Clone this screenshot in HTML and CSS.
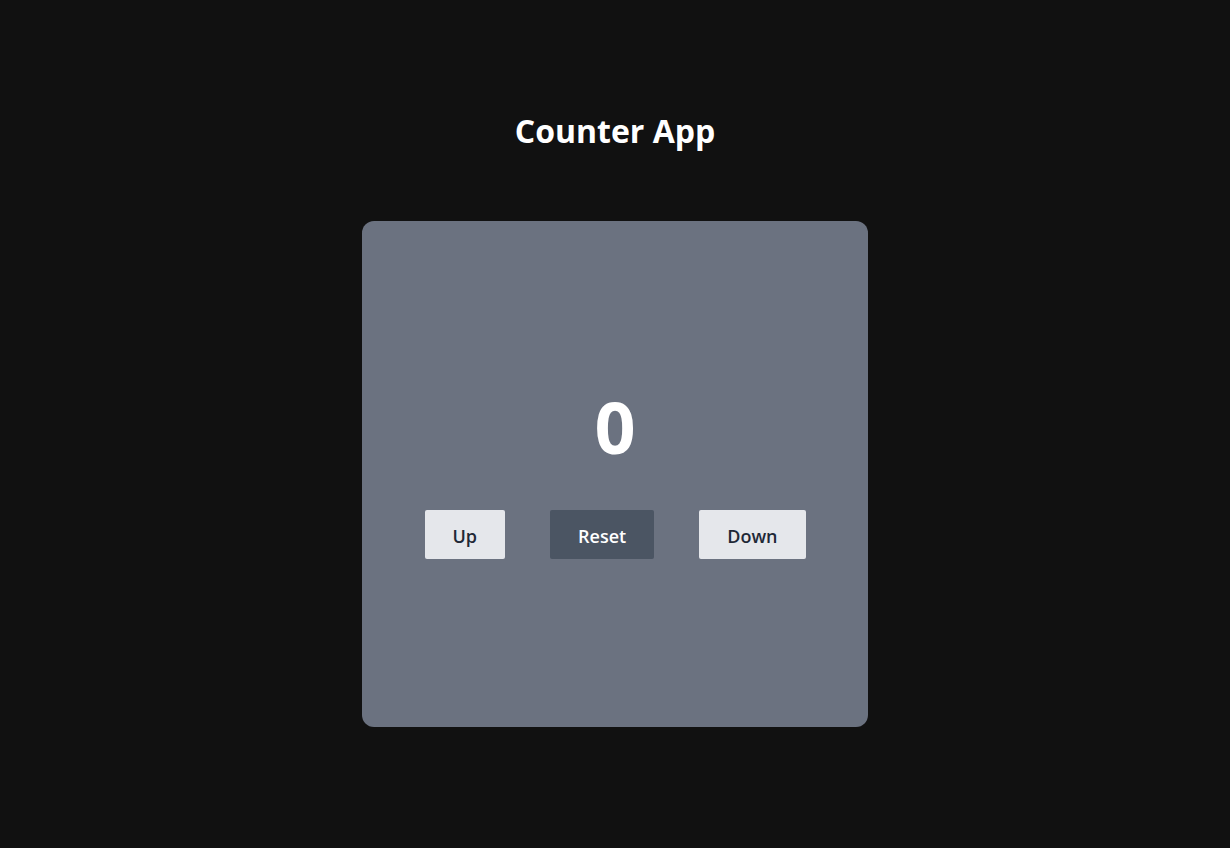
FILE: index.html
```html
<!DOCTYPE html>
<html lang="en">
<head>
<meta charset="utf-8">
<title>Counter App</title>
<link rel="stylesheet" href="styles.css">
</head>
<body>
<main class="page">
  <h1 class="title">Counter App</h1>
  <section class="card">
    <div class="count">0</div>
    <div class="actions">
      <button class="btn btn-light">Up</button>
      <button class="btn btn-dark">Reset</button>
      <button class="btn btn-light">Down</button>
    </div>
  </section>
</main>
</body>
</html>
```
FILE: styles.css
```css
html, body {
  margin: 0;
  padding: 0;
  background: #111111;
  height: 100%;
}
body {
  font-family: "Open Sans", "Noto Sans", sans-serif;
}
.page {
  display: flex;
  flex-direction: column;
  align-items: center;
  padding-top: 112px;
}
.title {
  margin: 0;
  font-size: 32px;
  line-height: 38px;
  font-weight: 700;
  color: #ffffff;
}
.card {
  margin-top: 71px;
  width: 506px;
  height: 506px;
  background: #6b7280;
  border-radius: 12px;
  display: flex;
  flex-direction: column;
  align-items: center;
  justify-content: center;
}
.count {
  font-size: 72px;
  line-height: 72px;
  font-weight: 700;
  color: #ffffff;
}
.actions {
  margin-top: 48px;
  display: flex;
  gap: 45px;
}
.btn {
  font-family: inherit;
  font-size: 18px;
  font-weight: 600;
  height: 49px;
  padding: 3px 28px 0;
  border: none;
  border-radius: 2px;
  cursor: pointer;
}
.btn-light {
  background: #e5e7eb;
  color: #1f2937;
}
.btn-dark {
  background: #4b5563;
  color: #ffffff;
}
```
